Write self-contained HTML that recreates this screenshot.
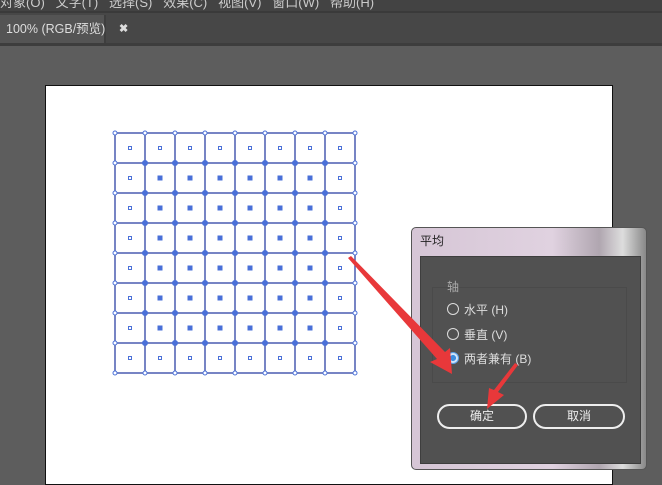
<!DOCTYPE html>
<html><head><meta charset="utf-8"><style>
*{margin:0;padding:0;box-sizing:border-box}
body{width:662px;height:473px;overflow:hidden;background:#5d5d5d;position:relative;font-family:"Liberation Sans","Noto Sans CJK SC",sans-serif}
.menu{position:absolute;left:0;top:0;width:662px;height:11px;background:#434343;color:#ccc;font-size:13px;overflow:hidden;white-space:nowrap}
.tabbar{position:absolute;left:0;top:11px;width:662px;height:32px;background:#474747;border-top:2px solid #3a3a3a}
.tab{position:absolute;left:0;top:2px;width:106px;height:28px;background:#545454;color:#ddd;font-size:12.5px;line-height:28px;padding-left:6px;white-space:nowrap;border-right:2px solid #3e3e3e}
.tab b{position:absolute;left:119px;top:0;font-size:11px;color:#ddd}
.tabline{position:absolute;left:0;top:43px;width:662px;height:3px;background:#3d3d3d}
.art{position:absolute;left:45px;top:85px;width:568px;height:400px;background:#fff;border:1px solid #111}
.dlg{position:absolute;left:411px;top:227px;width:236px;height:243px;background:linear-gradient(90deg,#d6c6d6 0%,#e0d2e0 60%,#b0a6b0 80%,#ddd 90%,#888 100%);border-radius:5px;border:1px solid #555}
.title{position:absolute;left:8px;top:4px;font-size:12px;color:#222}
.body{position:absolute;left:8px;top:28px;width:221px;height:208px;background:#515151;border:1px solid #3e3e3e}
.grp{position:absolute;left:11px;top:30px;width:195px;height:96px;border:1px solid #4a4a4a}
.lbl{position:absolute;color:#ddd;font-size:12px;white-space:nowrap}
.rad{position:absolute;width:12px;height:12px;border:1.5px solid #ddd;border-radius:50%}
.btn{position:absolute;top:147px;height:25px;border:2px solid #eee;border-radius:13px;color:#eee;font-size:12px;text-align:center;line-height:21px}
</style></head><body>
<div class="menu"><span style="position:absolute;left:0;top:-8px">对象(O)&nbsp;&nbsp;&nbsp;文字(T)&nbsp;&nbsp;&nbsp;选择(S)&nbsp;&nbsp;&nbsp;效果(C)&nbsp;&nbsp;&nbsp;视图(V)&nbsp;&nbsp;&nbsp;窗口(W)&nbsp;&nbsp;&nbsp;帮助(H)</span></div>
<div class="tabbar"><div class="tab">100% (RGB/预览)<b>✖</b></div></div>
<div class="tabline"></div>
<div class="art"></div>
<svg id="g" style="position:absolute;left:0;top:0" width="662" height="473"></svg>
<div class="dlg">
<div class="title">平均</div>
<div class="body">
<div class="grp"></div>
<div class="lbl" style="left:26px;top:21px;color:#aaa">轴</div>
<div class="rad" style="left:26px;top:46px"></div><div class="lbl" style="left:43px;top:44px">水平 (H)</div>
<div class="rad" style="left:26px;top:71px"></div><div class="lbl" style="left:43px;top:69px">垂直 (V)</div>
<div class="rad" style="left:26px;top:95px;border-color:#5aa0e8;background:radial-gradient(circle,#3c8de0 40%,#cfe4fa 45%)"></div><div class="lbl" style="left:43px;top:93px">两者兼有 (B)</div>
<div class="btn" style="left:16px;width:90px">确定</div>
<div class="btn" style="left:112px;width:92px">取消</div>
</div></div>
<svg style="position:absolute;left:0;top:0" width="662" height="473">
<polygon points="348,258 351,256 445,352 450,348 452,374 430,362 437,359" fill="#e8383a"/>
<polygon points="515,363 518,365 498,392 504,395 487,409 489,388 494,390" fill="#e8383a"/>
</svg>
<script>
var s='',c='#4a5cb0';
for(var i=0;i<9;i++){var p=115+i*30,q=133+i*30;
s+='<line x1="'+p+'" y1="133" x2="'+p+'" y2="373" stroke="'+c+'" stroke-width="1.5"/>';
s+='<line x1="115" y1="'+q+'" x2="355" y2="'+q+'" stroke="'+c+'" stroke-width="1.5"/>';}
for(var i=0;i<9;i++)for(var j=0;j<9;j++){var x=115+i*30,y=133+j*30;
var edge=(i==0||j==0||i==8||j==8);
s+='<circle cx="'+x+'" cy="'+y+'" r="'+(edge?2:2.5)+'" fill="'+(edge?'#fff':'#4a70d8')+'" stroke="#4a70d8" stroke-width="1"/>';}
for(var i=0;i<8;i++)for(var j=0;j<8;j++){var x=130+i*30,y=148+j*30;
var e=(i==0||j==0||i==7||j==7);
s+=e?'<rect x="'+(x-1.5)+'" y="'+(y-1.5)+'" width="3" height="3" fill="#fff" stroke="#4a70d8" stroke-width="1"/>':'<rect x="'+(x-2.5)+'" y="'+(y-2.5)+'" width="5" height="5" fill="#4a70d8"/>';}
document.getElementById('g').innerHTML=s;
</script>
</body></html>
